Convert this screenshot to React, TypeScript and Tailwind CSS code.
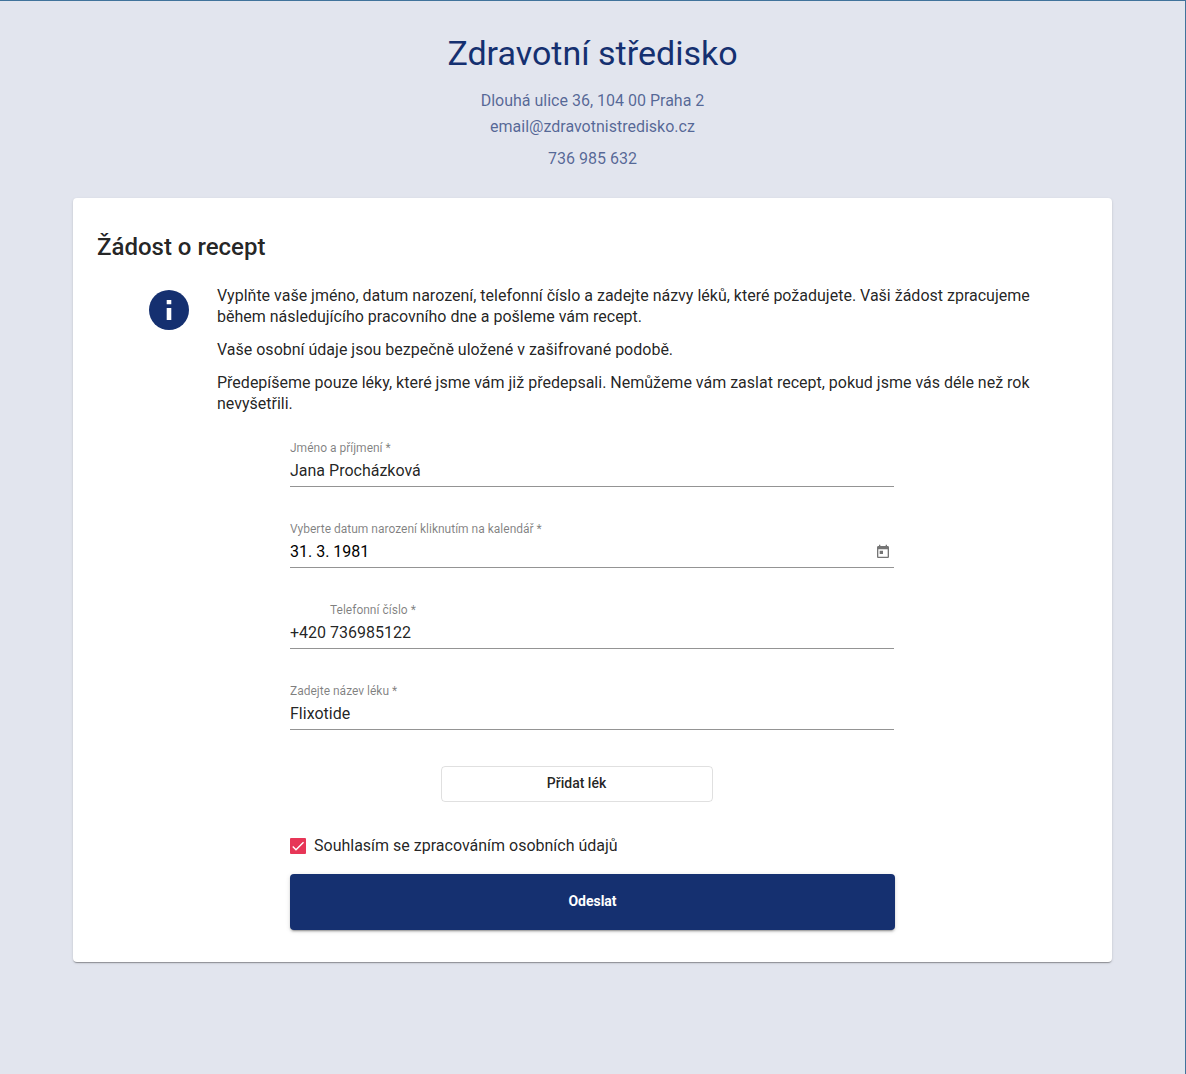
import React, { useState } from 'react';

interface FieldProps {
  id: string;
  label: string;
  defaultValue: string;
  type?: string;
  prefix?: string;
  inputClassName?: string;
  children?: React.ReactNode;
}

const Field: React.FC<FieldProps> = ({
  id,
  label,
  defaultValue,
  type = 'text',
  prefix,
  inputClassName = 'text-black/87',
  children,
}) => {
  return (
    <div className="border-b border-[#949494]">
      <label
        htmlFor={id}
        className={`block text-xs leading-4 text-black/50 ${prefix ? 'pl-10' : ''}`}
      >
        {label} *
      </label>
      <div className="flex h-[30px] items-center">
        {prefix && <span className="w-10 text-base text-black/87">{prefix}</span>}
        <input
          id={id}
          type={type}
          defaultValue={defaultValue}
          required
          className={`min-w-0 flex-1 bg-transparent text-base outline-none ${inputClassName}`}
        />
        {children}
      </div>
    </div>
  );
};

const InfoIcon = () => (
  <svg viewBox="0 0 40 40" className="size-10 shrink-0" aria-hidden="true">
    <circle cx="20" cy="20" r="20" fill="#153070" />
    <path d="M17.7 10h4.6v4.2h-4.6zM17.7 18h4.6v12h-4.6z" fill="#fff" />
  </svg>
);

const CalendarIcon = () => (
  <svg viewBox="0 0 24 24" className="size-4" fill="currentColor" aria-hidden="true">
    <path d="M19 3h-1V1h-2v2H8V1H6v2H5c-1.11 0-1.99.9-1.99 2L3 19c0 1.1.89 2 2 2h14c1.1 0 2-.9 2-2V5c0-1.1-.9-2-2-2zm0 16H5V8h14v11zM7 10h5v5H7z" />
  </svg>
);

const Header = () => (
  <header className="flex flex-col items-center text-[#153070]">
    <h1 className="text-[34px] leading-10">Zdravotní středisko</h1>
    <div className="mt-[15px] text-center text-base leading-[26px] text-[#153070]/70">
      <p>Dlouhá ulice 36, 104 00 Praha 2</p>
      <p>
        <a href="mailto:email@zdravotnistredisko.cz">email@zdravotnistredisko.cz</a>
      </p>
      <p className="mt-1.5">
        <a href="tel:736985632">736 985 632</a>
      </p>
    </div>
  </header>
);

const PrescriptionForm = () => {
  const [consent, setConsent] = useState(true);

  return (
    <form
      className="mx-auto mt-[26px] flex max-w-[605px] flex-col"
      onSubmit={(e) => e.preventDefault()}
    >
      <div className="flex flex-col gap-[34px] pr-px">
        <Field id="name" label="Jméno a příjmení" defaultValue="Jana Procházková" />
        <Field
          id="birthdate"
          label="Vyberte datum narození kliknutím na kalendář"
          defaultValue="31. 3. 1981"
          inputClassName="text-black"
        >
          <button type="button" aria-label="Otevřít kalendář" className="mr-[3px] text-black/54">
            <CalendarIcon />
          </button>
        </Field>
        <Field
          id="phone"
          label="Telefonní číslo"
          type="tel"
          prefix="+420"
          defaultValue="736985122"
        />
        <Field id="medicine" label="Zadejte název léku" defaultValue="Flixotide" />
      </div>

      <div className="mt-9 flex justify-center pr-8">
        <button
          type="button"
          className="h-9 w-[272px] rounded border border-black/12 pb-0.5 text-sm font-medium text-black/87"
        >
          Přidat lék
        </button>
      </div>

      <div className="mt-8 flex items-center gap-2">
        <span className="relative size-4">
          <input
            id="consent"
            type="checkbox"
            checked={consent}
            onChange={(e) => setConsent(e.target.checked)}
            className="block size-4 appearance-none rounded-[1px] border-2 border-black/54 checked:border-0 checked:bg-[#e73657]"
          />
          {consent && (
            <svg
              viewBox="0 0 24 24"
              className="pointer-events-none absolute inset-0 size-4"
              aria-hidden="true"
            >
              <path d="M4.1 12.7L9 17.6 20.3 6.3" fill="none" stroke="#fff" strokeWidth="2.1" />
            </svg>
          )}
        </span>
        <label htmlFor="consent" className="text-base text-black/87">
          Souhlasím se zpracováním osobních údajů
        </label>
      </div>

      <button
        type="submit"
        className="mt-4 h-14 w-full rounded bg-[#153070] pb-0.5 text-sm font-bold text-white shadow-[0_3px_1px_-2px_rgba(0,0,0,0.2),0_2px_2px_0_rgba(0,0,0,0.14),0_1px_5px_0_rgba(0,0,0,0.12)]"
      >
        Odeslat
      </button>
    </form>
  );
};

const App = () => {
  return (
    <div className="min-h-screen border-t border-r border-[#41739b] bg-[#e2e5ee] px-4 pt-8 pb-8 font-['Roboto',sans-serif] md:px-[73px]">
      <Header />
      <main className="mt-[26px] rounded bg-white px-6 pt-[33px] pb-8 text-black/87 shadow-[0_2px_1px_-1px_rgba(0,0,0,0.2),0_1px_1px_0_rgba(0,0,0,0.14),0_1px_3px_0_rgba(0,0,0,0.12)]">
        <h2 className="text-2xl font-medium">Žádost o recept</h2>
        <div className="mt-[22px] flex gap-7 md:px-[52px]">
          <div className="pt-[5px]">
            <InfoIcon />
          </div>
          <div className="flex max-w-[825px] flex-col gap-3 text-base leading-[21px]">
            <p>
              Vyplňte vaše jméno, datum narození, telefonní číslo a zadejte názvy léků, které
              požadujete. Vaši žádost zpracujeme během následujícího pracovního dne a pošleme vám
              recept.
            </p>
            <p>Vaše osobní údaje jsou bezpečně uložené v zašifrované podobě.</p>
            <p>
              Předepíšeme pouze léky, které jsme vám již předepsali. Nemůžeme vám zaslat recept,
              pokud jsme vás déle než rok nevyšetřili.
            </p>
          </div>
        </div>
        <PrescriptionForm />
      </main>
    </div>
  );
};

export default App;
